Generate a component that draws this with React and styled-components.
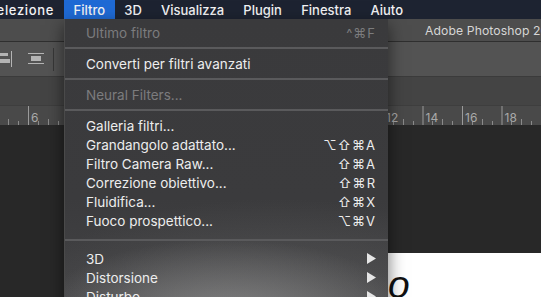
import React from "react";
import styled, { createGlobalStyle } from "styled-components";

const Global = createGlobalStyle`
  html, body { margin: 0; padding: 0; background: #282828; overflow: hidden; }
  body { width: 541px; height: 297px; font-family: Inter, "Liberation Sans", sans-serif; }
  #root { width: 541px; height: 297px; }
`;

const Screen = styled.div`
  position: relative;
  width: 541px;
  height: 297px;
  overflow: hidden;
  display: flex;
  flex-direction: column;
  background: #282828;
`;

const MenuBar = styled.div`
  flex: none;
  height: 19px;
  display: flex;
  align-items: stretch;
  background: #1d2331;
  color: #f2f2f4;
  font: 500 13px Inter, "Liberation Sans", sans-serif;
  white-space: nowrap;
`;

const MenuTitle = styled.div`
  display: flex;
  align-items: center;
  padding: 0 9.6px;
  background: ${(p) => (p.$active ? "#1f6ad5" : "transparent")};
`;

const LeadTitle = styled(MenuTitle)`
  flex: none;
  width: 64px;
  box-sizing: border-box;
  justify-content: flex-end;
  padding: 0 10px 0 0;
  overflow: hidden;
  letter-spacing: 0.65px;
`;

const TitleBar = styled.div`
  flex: none;
  height: 22px;
  display: flex;
  align-items: center;
  padding-left: 425px;
  background: #4d4d4d;
  border-bottom: 1px solid #2f2f2f;
  color: #d6d6d6;
  font: 400 12.2px Inter, "Liberation Sans", sans-serif;
  letter-spacing: 0.1px;
  white-space: nowrap;
`;

const OptionsBar = styled.div`
  flex: none;
  height: 34px;
  display: flex;
  align-items: center;
  background: #535353;
  border-bottom: 1px solid #3b3b3b;
`;

const ToolIcon = styled.svg`
  flex: none;
  margin-left: ${(p) => p.$ml || 0}px;
  display: block;
`;

const ToolSep = styled.div`
  flex: none;
  width: 1px;
  height: 23px;
  margin-left: ${(p) => p.$ml || 0}px;
  background: #383838;
`;

const TabStrip = styled.div`
  flex: none;
  height: 28px;
  background: #444444;
`;

const RulerBar = styled.div`
  flex: none;
  height: 19px;
  background: #494949;
  border-top: 1px solid #3e3e3e;
`;

const Canvas = styled.div`
  flex: 1;
  display: flex;
  flex-direction: column;
  background: #282828;
  min-height: 0;
`;

const Doc = styled.div`
  margin-top: 128px;
  margin-left: 300px;
  flex: 1;
  background: #ffffff;
  padding: 12px 0 0 88px;
  font: italic 400 39px "Liberation Sans", sans-serif;
  color: #111;
  line-height: 1;
`;

const Menu = styled.div`
  position: absolute;
  left: 64px;
  top: 19px;
  width: 324px;
  height: 300px;
  box-sizing: border-box;
  padding-top: 4px;
  border-left: 1px solid #4a4a4a;
  background:
    radial-gradient(ellipse 190px 80px at 160px 300px, rgba(150,150,150,0.7), rgba(150,150,150,0) 100%),
    radial-gradient(ellipse 280px 130px at 210px 310px, rgba(110,110,110,0.5), rgba(110,110,110,0) 100%),
    linear-gradient(180deg, #3a3a3c 0%, #3b3b3d 60%, #444446 100%);
  box-shadow: 0 6px 16px rgba(0, 0, 0, 0.55);
  font: 400 13.5px Inter, "Liberation Sans", sans-serif;
`;

const Item = styled.div`
  height: 19px;
  display: flex;
  align-items: center;
  justify-content: space-between;
  padding: 0 12px 0 21px;
  color: ${(p) => (p.$disabled ? "#7c7c7e" : "#ededed")};
  white-space: nowrap;
`;

const Shortcut = styled.span`
  font-family: Inter, "DejaVu Sans", sans-serif;
  font-size: 13px;
  letter-spacing: 1px;
`;

const Sep = styled.div`
  height: ${(p) => (p.$tall ? 19 : 12)}px;
  display: flex;
  align-items: center;
  &::after {
    content: "";
    flex: 1;
    height: 2px;
    background: #5a5a5c;
  }
`;

const Arrow = () => (
  <svg width="9" height="11" viewBox="0 0 9 11">
    <polygon points="0,0 9,5.5 0,11" fill="#e6e6e6" />
  </svg>
);

const Ruler = () => {
  const majors = [
    { x: -11.5, l: "4" },
    { x: 28, l: "6" },
    { x: 67.5, l: "8" },
    { x: 383, l: "12" },
    { x: 422.5, l: "14" },
    { x: 462, l: "16" },
    { x: 501.5, l: "18" },
    { x: 541, l: "20" },
  ];
  const lines = [];
  majors.forEach((m, i) => {
    lines.push(<line key={"M" + i} x1={m.x + 0.5} x2={m.x + 0.5} y1="0" y2="19" stroke="#9a9a9a" />);
    [1, 2, 3].forEach((q) => {
      const x = Math.round(m.x + q * 9.87) + 0.5;
      lines.push(
        <line key={"m" + i + q} x1={x} x2={x} y1={q === 2 ? 13 : 15} y2="19" stroke="#8a8a8a" />
      );
    });
  });
  return (
    <svg width="541" height="19" viewBox="0 0 541 19" style={{ display: "block" }}>
      {lines}
      {majors.map((m, i) => (
        <text key={"t" + i} x={m.x + 3} y="16" fontSize="12" fill="#a9a9a9" fontFamily="Inter, 'Liberation Sans', sans-serif">
          {m.l}
        </text>
      ))}
    </svg>
  );
};

export default function App() {
  return (
    <>
      <Global />
      <Screen>
        <MenuBar>
          <LeadTitle>Selezione</LeadTitle>
          <MenuTitle $active>Filtro</MenuTitle>
          <MenuTitle>3D</MenuTitle>
          <MenuTitle>Visualizza</MenuTitle>
          <MenuTitle>Plugin</MenuTitle>
          <MenuTitle>Finestra</MenuTitle>
          <MenuTitle>Aiuto</MenuTitle>
        </MenuBar>
        <TitleBar>Adobe Photoshop 2021</TitleBar>
        <OptionsBar>
          <ToolIcon width="14" height="16" viewBox="0 0 14 16" $ml={-2}>
            <rect x="0" y="2" width="10" height="3" fill="#b4b4b4" />
            <rect x="0" y="8" width="12" height="4" fill="#b4b4b4" />
            <rect x="13" y="0" width="1" height="16" fill="#b4b4b4" />
          </ToolIcon>
          <ToolIcon width="16" height="12" viewBox="0 0 16 12" $ml={16}>
            <rect x="0" y="0" width="16" height="1" fill="#b4b4b4" />
            <rect x="3" y="3" width="10" height="5" fill="#b4b4b4" />
            <rect x="0" y="10" width="16" height="1" fill="#b4b4b4" />
          </ToolIcon>
          <ToolSep $ml={9} />
        </OptionsBar>
        <TabStrip />
        <RulerBar>
          <Ruler />
        </RulerBar>
        <Canvas>
          <Doc>o</Doc>
        </Canvas>

        <Menu>
          <Item $disabled>
            <span>Ultimo filtro</span>
            <Shortcut>^⌘F</Shortcut>
          </Item>
          <Sep />
          <Item>
            <span>Converti per filtri avanzati</span>
          </Item>
          <Sep />
          <Item $disabled>
            <span>Neural Filters...</span>
          </Item>
          <Sep />
          <Item>
            <span>Galleria filtri...</span>
          </Item>
          <Item>
            <span>Grandangolo adattato...</span>
            <Shortcut>⌥⇧⌘A</Shortcut>
          </Item>
          <Item>
            <span>Filtro Camera Raw...</span>
            <Shortcut>⇧⌘A</Shortcut>
          </Item>
          <Item>
            <span>Correzione obiettivo...</span>
            <Shortcut>⇧⌘R</Shortcut>
          </Item>
          <Item>
            <span>Fluidifica...</span>
            <Shortcut>⇧⌘X</Shortcut>
          </Item>
          <Item>
            <span>Fuoco prospettico...</span>
            <Shortcut>⌥⌘V</Shortcut>
          </Item>
          <Sep $tall />
          <Item>
            <span>3D</span>
            <Arrow />
          </Item>
          <Item>
            <span>Distorsione</span>
            <Arrow />
          </Item>
          <Item>
            <span>Disturbo</span>
            <Arrow />
          </Item>
        </Menu>
      </Screen>
    </>
  );
}
